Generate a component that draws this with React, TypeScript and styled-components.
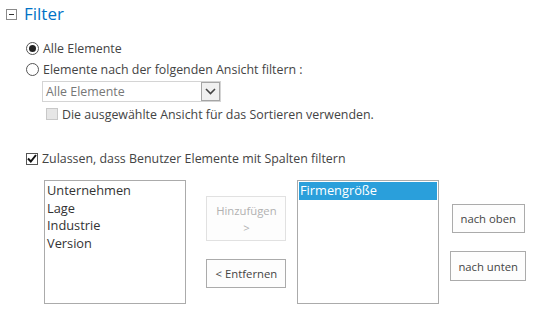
import styled, { createGlobalStyle } from 'styled-components';

const GlobalStyle = createGlobalStyle`
  body {
    margin: 0;
    background: #fff;
    font-family: 'Open Sans', 'Noto Sans', sans-serif;
    font-size: 12.4px;
    color: #444;
  }
`;

const Page = styled.div`
  width: 537px;
  height: 317px;
  padding: 5px 0 0 6px;
  box-sizing: border-box;
`;

const Header = styled.div`
  display: flex;
  align-items: center;
  gap: 7px;
  height: 18px;
`;

const Toggle = styled.span`
  width: 9px;
  height: 9px;
  border: 1px solid #8a8a8a;
  display: flex;
  align-items: center;
  justify-content: center;

  &::after {
    content: '';
    width: 5px;
    height: 1px;
    background: #333;
  }
`;

const Title = styled.span`
  font-size: 17px;
  color: #0072c6;
  line-height: 18px;
`;

const Body = styled.div`
  padding: 15px 0 0 20px;
`;

const OptionRow = styled.label`
  display: flex;
  align-items: center;
  gap: 4px;
  height: 21px;
  white-space: nowrap;
`;

const Radio = styled.span<{ $checked?: boolean }>`
  width: 11px;
  height: 11px;
  border: 1px solid #555;
  border-radius: 50%;
  display: flex;
  align-items: center;
  justify-content: center;

  &::after {
    content: '';
    width: 7px;
    height: 7px;
    border-radius: 50%;
    background: ${(p) => (p.$checked ? '#222' : 'transparent')};
  }
`;

const Nested = styled.div`
  padding-left: 16px;
  padding-top: 1px;
`;

const Select = styled.div`
  width: 179px;
  height: 21px;
  border: 1px solid #d4d4d4;
  box-sizing: border-box;
  display: flex;
  align-items: center;
  justify-content: space-between;
  padding-left: 3px;
  color: #777;
`;

const SelectArrow = styled.span`
  width: 19px;
  height: 19px;
  box-sizing: border-box;
  border: 1px solid #a5a5a5;
  background: #f0f0f0;
  display: flex;
  align-items: center;
  justify-content: center;
`;

const Check = styled.span<{ $disabled?: boolean }>`
  width: 12px;
  height: 12px;
  box-sizing: border-box;
  border: 1px solid ${(p) => (p.$disabled ? '#c8c8c8' : '#555')};
  background: ${(p) => (p.$disabled ? '#e6e6e6' : '#fff')};
  display: flex;
  align-items: center;
  justify-content: center;
`;

const SubOption = styled(OptionRow)`
  padding-left: 4px;
  height: 24px;
`;

const AllowRow = styled(OptionRow)`
  margin-top: 22px;
`;

const Lists = styled.div`
  display: flex;
  align-items: flex-start;
  margin-top: 11px;
  padding-left: 18px;
`;

const ListBox = styled.div`
  width: 143px;
  height: 124px;
  box-sizing: border-box;
  border: 1px solid #ababab;
  padding: 1px;
  display: flex;
  flex-direction: column;
  color: #333;
  font-size: 12.8px;
`;

const ListItem = styled.div<{ $selected?: boolean }>`
  height: 17.5px;
  line-height: 17.5px;
  padding-left: 1px;
  background: ${(p) => (p.$selected ? '#2a9fdb' : 'transparent')};
  color: ${(p) => (p.$selected ? '#fff' : '#333')};
`;

const ButtonColumn = styled.div<{ $top: number; $left: number; $width: number; $align: string }>`
  width: ${(p) => p.$width}px;
  box-sizing: border-box;
  display: flex;
  flex-direction: column;
  align-items: ${(p) => p.$align};
  gap: 18px;
  padding-top: ${(p) => p.$top}px;
  padding-left: ${(p) => p.$left}px;
`;

const Button = styled.div<{ $w: number; $h: number; $disabled?: boolean }>`
  width: ${(p) => p.$w}px;
  height: ${(p) => p.$h}px;
  box-sizing: border-box;
  border: 1px solid ${(p) => (p.$disabled ? '#e1e1e1' : '#ababab')};
  background: #fdfdfd;
  color: ${(p) => (p.$disabled ? '#b1b1b1' : '#444')};
  font-size: 11.3px;
  display: flex;
  flex-direction: column;
  align-items: center;
  justify-content: center;
  text-align: center;
  line-height: 17px;
`;

export default function App() {
  return (
    <Page>
      <GlobalStyle />
      <Header>
        <Toggle />
        <Title>Filter</Title>
      </Header>
      <Body>
        <OptionRow>
          <Radio $checked />
          Alle Elemente
        </OptionRow>
        <OptionRow>
          <Radio />
          Elemente nach der folgenden Ansicht filtern :
        </OptionRow>
        <Nested>
          <Select>
            Alle Elemente
            <SelectArrow>
              <svg width="11" height="7" viewBox="0 0 11 7">
                <path d="M1 1 L5.5 5.5 L10 1" fill="none" stroke="#444" strokeWidth="1.6" />
              </svg>
            </SelectArrow>
          </Select>
          <SubOption>
            <Check $disabled />
            Die ausgewählte Ansicht für das Sortieren verwenden.
          </SubOption>
        </Nested>
        <AllowRow>
          <Check>
            <svg width="10" height="9" viewBox="0 0 10 9">
              <path d="M1 4.5 L3.8 7.5 L9 1" fill="none" stroke="#111" strokeWidth="2" />
            </svg>
          </Check>
          Zulassen, dass Benutzer Elemente mit Spalten filtern
        </AllowRow>
        <Lists>
          <ListBox>
            <ListItem>Unternehmen</ListItem>
            <ListItem>Lage</ListItem>
            <ListItem>Industrie</ListItem>
            <ListItem>Version</ListItem>
          </ListBox>
          <ButtonColumn $top={16} $left={20} $width={111} $align="flex-start">
            <Button $w={80} $h={45} $disabled>
              <span>Hinzufügen</span>
              <span>&gt;</span>
            </Button>
            <Button $w={80} $h={29}>
              &lt; Entfernen
            </Button>
          </ButtonColumn>
          <ListBox>
            <ListItem $selected>Firmengröße</ListItem>
          </ListBox>
          <ButtonColumn $top={24} $left={0} $width={98} $align="center">
            <Button $w={73} $h={29}>
              nach oben
            </Button>
            <Button $w={76} $h={30}>
              nach unten
            </Button>
          </ButtonColumn>
        </Lists>
      </Body>
    </Page>
  );
}
